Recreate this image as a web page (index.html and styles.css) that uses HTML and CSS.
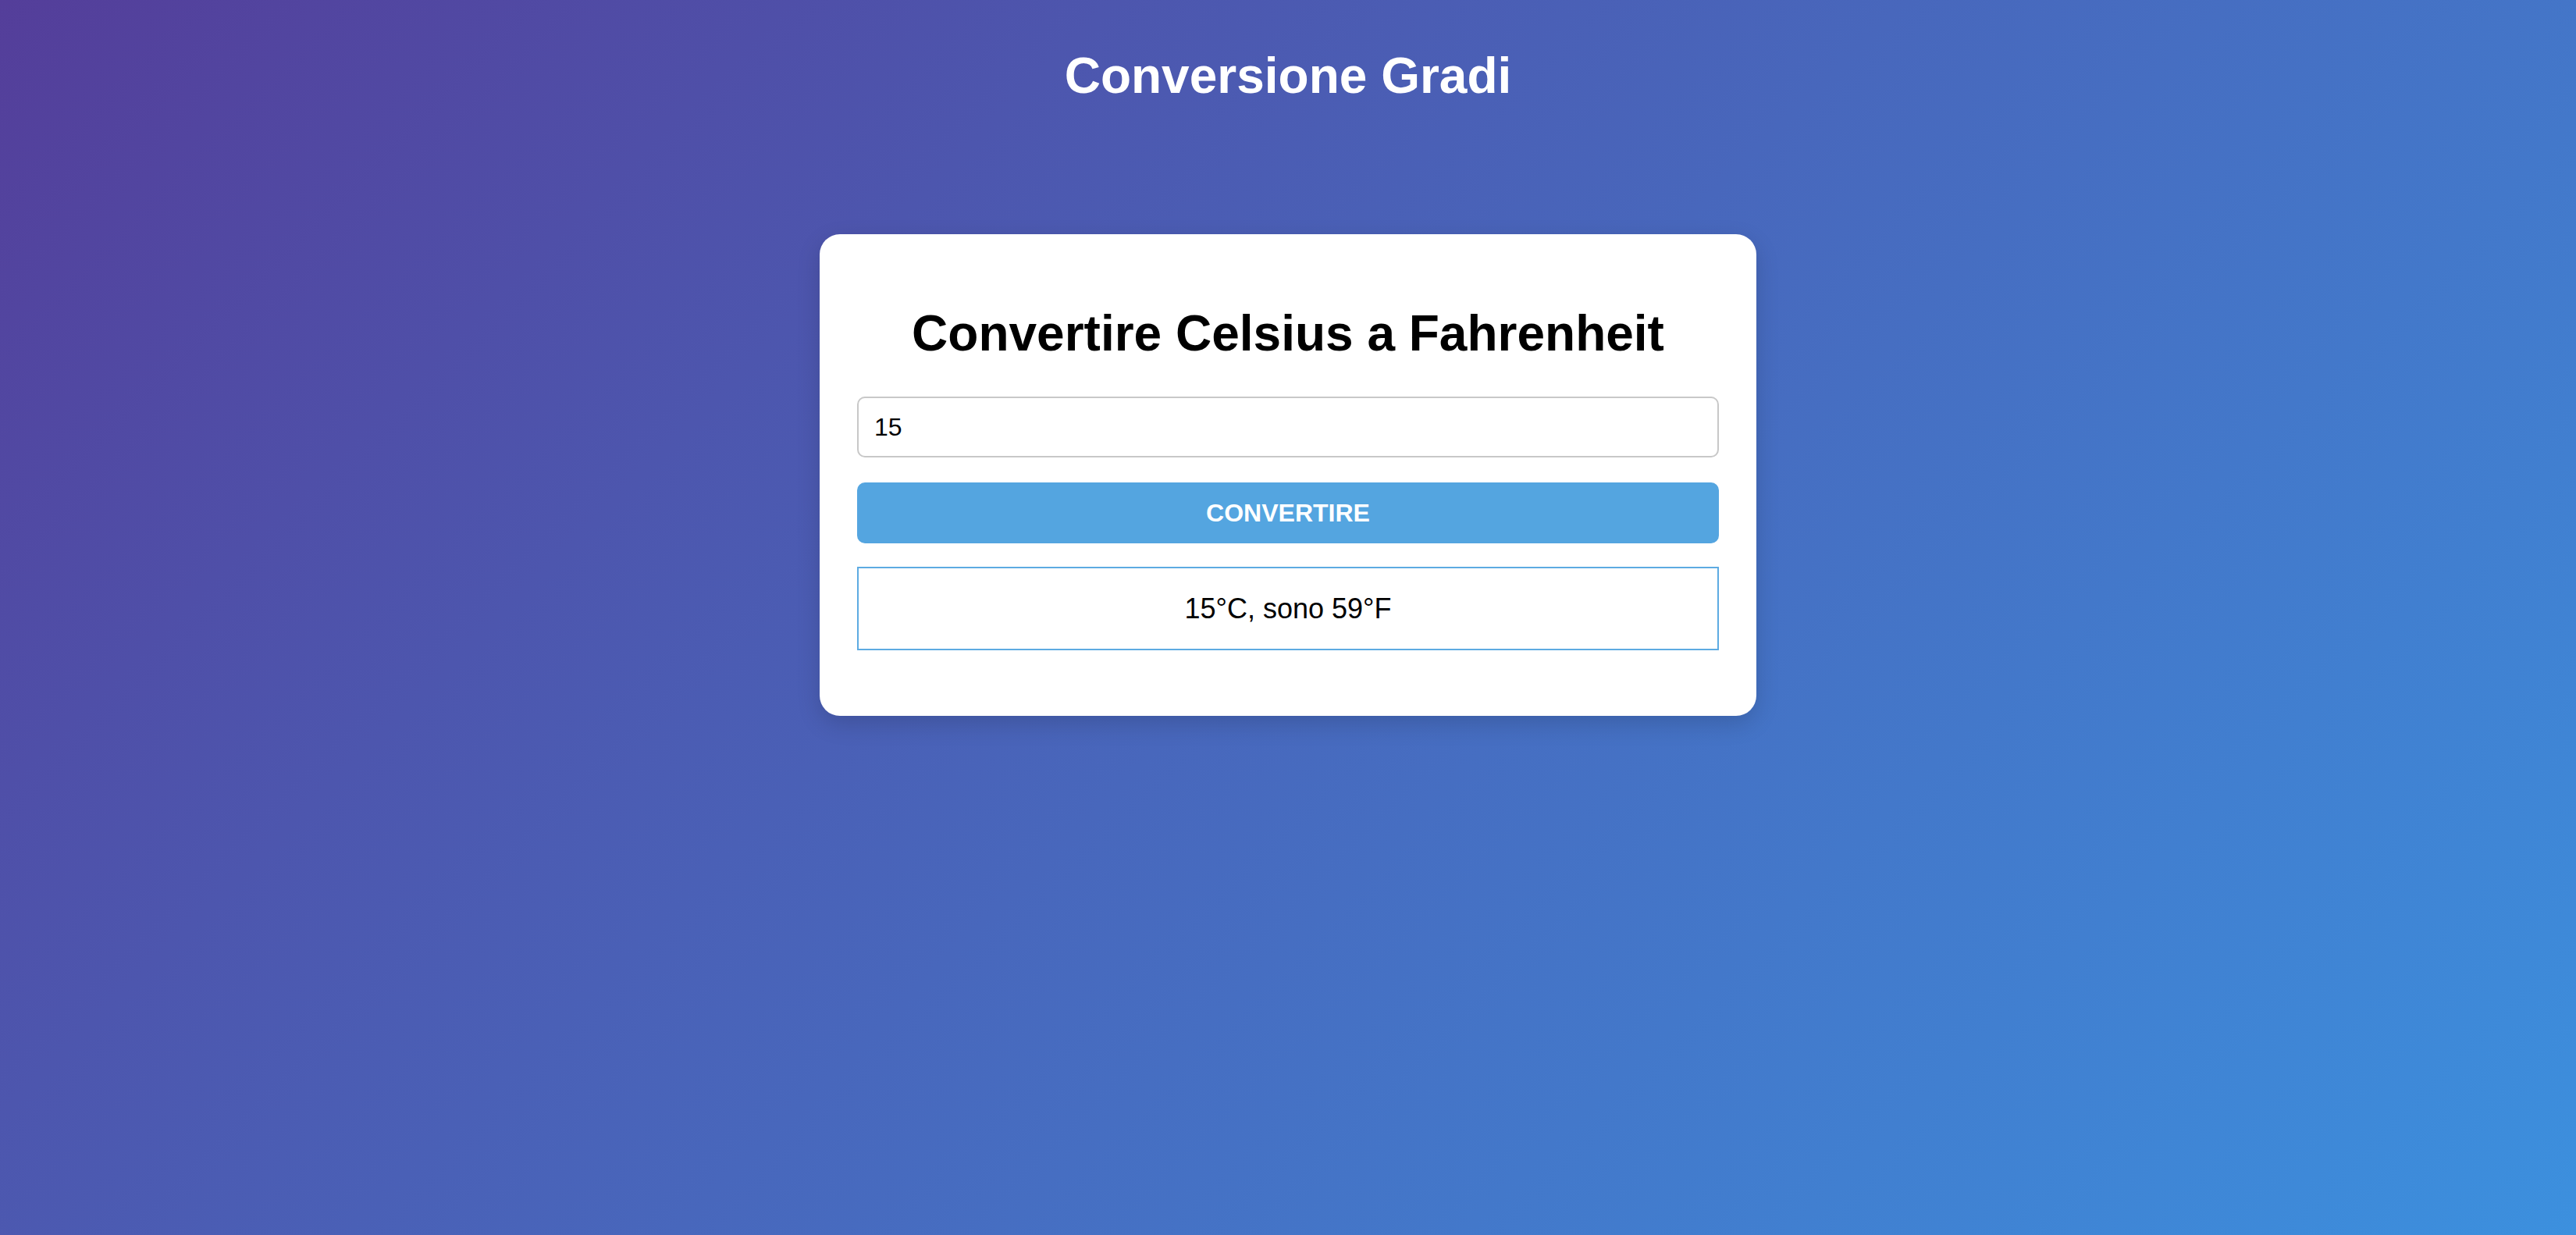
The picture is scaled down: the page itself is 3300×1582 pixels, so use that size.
FILE: index.html
```html
<!DOCTYPE html>
<html lang="it">
<head>
<meta charset="utf-8">
<title>Conversione Gradi</title>
<link rel="stylesheet" href="styles.css">
</head>
<body>
<h1 class="page-title">Conversione Gradi</h1>
<main class="card">
  <h2 class="card-title">Convertire Celsius a Fahrenheit</h2>
  <input class="temp-input" type="text" value="15">
  <button class="convert-btn" type="button">Convertire</button>
  <div class="result">15°C, sono 59°F</div>
</main>
</body>
</html>
```

FILE: styles.css
```css
html, body {
  height: 100%;
}
body {
  margin: 0;
  padding: 16px;
  box-sizing: border-box;
  min-height: 100vh;
  font-family: "Liberation Sans", Arial, sans-serif;
  background: linear-gradient(135deg, #543e9a 0%, #3c90de 100%);
  display: flex;
  flex-direction: column;
  align-items: center;
}
.page-title {
  margin: 44px 0 0;
  font-size: 64px;
  line-height: 74px;
  font-weight: bold;
  color: #fff;
  text-align: center;
}
.card {
  margin-top: 166px;
  width: 1200px;
  box-sizing: border-box;
  padding: 48px;
  padding-bottom: 84px;
  background: #fff;
  border-radius: 26px;
  box-shadow: 0 10px 30px rgba(0, 0, 0, 0.15);
  display: flex;
  flex-direction: column;
}
.card-title {
  margin: 42px 0 44px;
  font-size: 64px;
  line-height: 74px;
  font-weight: bold;
  color: #000;
  text-align: center;
}
.temp-input {
  height: 78px;
  box-sizing: border-box;
  padding: 0 20px;
  border: 2px solid #c8c8c8;
  border-radius: 10px;
  font-family: "Liberation Sans", Arial, sans-serif;
  font-size: 32px;
  color: #000;
  outline: none;
}
.convert-btn {
  margin-top: 32px;
  height: 78px;
  border: none;
  border-radius: 10px;
  background: #54a5e0;
  color: #fff;
  font-family: "Liberation Sans", Arial, sans-serif;
  font-size: 32px;
  font-weight: bold;
  text-transform: uppercase;
}
.result {
  margin-top: 30px;
  height: 107px;
  box-sizing: border-box;
  border: 2px solid #5dabe2;
  display: flex;
  align-items: center;
  justify-content: center;
  font-size: 36px;
  color: #000;
}
```
